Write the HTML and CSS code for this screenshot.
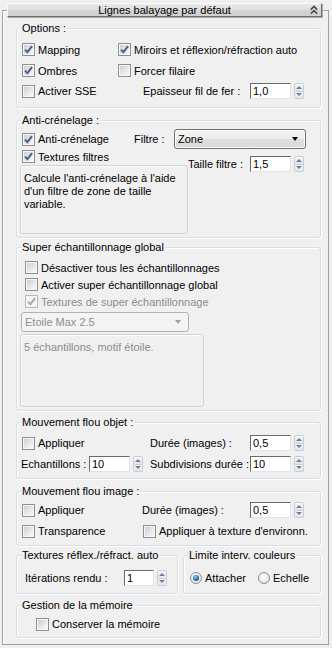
FILE: index.html
```html
<!DOCTYPE html>
<html lang="fr">
<head>
<meta charset="utf-8">
<title>Lignes balayage par défaut</title>
<link rel="stylesheet" href="styles.css">
</head>
<body>
<div class="frame">
  <div class="titlebar">
    <span class="tb-text">Lignes balayage par défaut</span>
    <svg class="chev" width="8" height="10" viewBox="0 0 8 10"><path d="M0.8 4.6L4 1.4L7.2 4.6M0.8 8.8L4 5.6L7.2 8.8" fill="none" stroke="#4a4a4a" stroke-width="1.6"/></svg>
  </div>

  <div class="group g-opt">
    <div class="gtitle">Options :</div>
    <div class="body pl5">
      <div class="row h21 mt4">
        <span class="cb w96"><span class="box"><svg width="9" height="9" viewBox="0 0 9 9"><path d="M1 4.6L3.4 7.2L8 1.2" fill="none" stroke="#4b5f90" stroke-width="2"/></svg></span>Mapping</span>
        <span class="cb"><span class="box"><svg width="9" height="9" viewBox="0 0 9 9"><path d="M1 4.6L3.4 7.2L8 1.2" fill="none" stroke="#4b5f90" stroke-width="2"/></svg></span>Miroirs et réflexion/réfraction auto</span>
      </div>
      <div class="row h21">
        <span class="cb w96"><span class="box"><svg width="9" height="9" viewBox="0 0 9 9"><path d="M1 4.6L3.4 7.2L8 1.2" fill="none" stroke="#4b5f90" stroke-width="2"/></svg></span>Ombres</span>
        <span class="cb"><span class="box"></span>Forcer filaire</span>
      </div>
      <div class="row h20">
        <span class="cb w96"><span class="box"></span>Activer SSE</span>
        <span class="lbl ml25 w107">Epaisseur fil de fer :</span>
        <span class="field">1,0</span>
        <span class="spin"><i></i><i></i></span>
      </div>
    </div>
  </div>

  <div class="group g-anti">
    <div class="gtitle">Anti-crénelage :</div>
    <div class="body pl5">
      <div class="row h20 mt2">
        <span class="cb w112"><span class="box"><svg width="9" height="9" viewBox="0 0 9 9"><path d="M1 4.6L3.4 7.2L8 1.2" fill="none" stroke="#4b5f90" stroke-width="2"/></svg></span>Anti-crénelage</span>
        <span class="lbl w40">Filtre :</span>
        <span class="dd w132"><span>Zone</span></span>
      </div>
      <div class="split">
        <div class="col-left">
          <div class="row h15">
            <span class="cb ml2"><span class="box"><svg width="9" height="9" viewBox="0 0 9 9"><path d="M1 4.6L3.4 7.2L8 1.2" fill="none" stroke="#4b5f90" stroke-width="2"/></svg></span>Textures filtres</span>
          </div>
          <div class="desc desc-anti">Calcule l'anti-crénelage à l'aide<br>d'un filtre de zone de taille<br>variable.</div>
        </div>
        <div class="col-right">
          <div class="row h16 mt7">
            <span class="lbl w62">Taille filtre :</span>
            <span class="field">1,5</span>
            <span class="spin"><i></i><i></i></span>
          </div>
        </div>
      </div>
    </div>
  </div>

  <div class="group g-super">
    <div class="gtitle">Super échantillonnage global</div>
    <div class="body pl8">
      <div class="row h17 mt5">
        <span class="cb"><span class="box"></span>Désactiver tous les échantillonnages</span>
      </div>
      <div class="row h17">
        <span class="cb"><span class="box"></span>Activer super échantillonnage global</span>
      </div>
      <div class="row h17 dis">
        <span class="cb"><span class="box box-dis"><svg width="9" height="9" viewBox="0 0 9 9"><path d="M1 4.6L3.4 7.2L8 1.2" fill="none" stroke="#a9a9a9" stroke-width="2"/></svg></span>Textures de super échantillonnage</span>
      </div>
      <div class="dd dd-dis dd-super"><span>Etoile Max 2.5</span></div>
      <div class="desc desc-super dis">5 échantillons, motif étoile.</div>
    </div>
  </div>

  <div class="group g-mfo">
    <div class="gtitle">Mouvement flou objet :</div>
    <div class="body pl5">
      <div class="row h16 mt6">
        <span class="cb w128"><span class="box"></span>Appliquer</span>
        <span class="lbl w100">Durée (images) :</span>
        <span class="field">0,5</span>
        <span class="spin"><i></i><i></i></span>
      </div>
      <div class="row h16 mt5">
        <span class="lbl mln1 w68">Echantillons :</span>
        <span class="field">10</span>
        <span class="spin"><i></i><i></i></span>
        <span class="lbl ml7 w100">Subdivisions durée :</span>
        <span class="field">10</span>
        <span class="spin"><i></i><i></i></span>
      </div>
    </div>
  </div>

  <div class="group g-mfi">
    <div class="gtitle">Mouvement flou image :</div>
    <div class="body pl5">
      <div class="row h16 mt4">
        <span class="cb w120"><span class="box"></span>Appliquer</span>
        <span class="lbl w108">Durée (images) :</span>
        <span class="field">0,5</span>
        <span class="spin"><i></i><i></i></span>
      </div>
      <div class="row h16 mt5">
        <span class="cb w121"><span class="box"></span>Transparence</span>
        <span class="cb"><span class="box"></span>Appliquer à texture d'environn.</span>
      </div>
    </div>
  </div>

  <div class="pair">
    <div class="group g-tex">
      <div class="gtitle">Textures réflex./réfract. auto</div>
      <div class="body pl8">
        <div class="row h16 mt8">
          <span class="lbl w99">Itérations rendu :</span>
          <span class="field w30">1</span>
          <span class="spin"><i></i><i></i></span>
        </div>
      </div>
    </div>
    <div class="group g-lim">
      <div class="gtitle">Limite interv. couleurs</div>
      <div class="body pl6">
        <div class="row h16 mt8">
          <span class="rb w68"><span class="radio on"></span>Attacher</span>
          <span class="rb"><span class="radio"></span>Echelle</span>
        </div>
      </div>
    </div>
  </div>

  <div class="group g-mem">
    <div class="gtitle">Gestion de la mémoire</div>
    <div class="body pl19">
      <div class="row h16 mt4">
        <span class="cb"><span class="box"></span>Conserver la mémoire</span>
      </div>
    </div>
  </div>
</div>
</body>
</html>
```

FILE: styles.css
```css
* { box-sizing: border-box; }
html, body { margin: 0; padding: 0; }
body {
  background: #f0f0f0;
  font-family: "Liberation Sans", Arial, sans-serif;
  font-size: 11px;
  color: #000;
  width: 332px;
  height: 648px;
  overflow: hidden;
}

.frame {
  margin: 10px 0 0 2px;
  width: 327px;
  height: 635px;
  border: 1px solid #a0a0a0;
  box-shadow: inset 1px 1px 0 #fff;
  display: flow-root;
}

.titlebar {
  height: 14px;
  margin: -8px 6px 0 4px;
  display: grid;
  grid-template-columns: 1fr auto 1fr;
  align-items: center;
  border: 1px solid;
  border-color: #fafafa #6e6e6e #6e6e6e #fafafa;
  background: linear-gradient(#e8e8e8, #dedede 50%, #d4d4d4 51%, #d0d0d0);
  box-shadow: 1px 1px 0 #ababab;
  line-height: 12px;
}
.tb-text { grid-column: 2; white-space: nowrap; }
.chev { grid-column: 3; justify-self: end; margin-right: 3px; }

.group {
  border: 1px solid #d5dfe5;
  border-radius: 3px;
  box-shadow: inset 1px 1px 0 #fff, 1px 1px 0 #fff;
  margin-left: 13px;
  width: 305px;
}
.gtitle {
  width: max-content;
  height: 14px;
  line-height: 14px;
  margin: -8px 0 0 4px;
  padding: 0 1px;
  background: #f0f0f0;
  white-space: nowrap;
}

.g-opt { margin-top: 11px; height: 80px; }
.g-anti { margin-top: 12px; height: 118px; }
.g-super { margin-top: 9px; height: 164px; }
.g-mfo { margin-top: 11px; height: 57px; }
.g-mfi { margin-top: 12px; height: 55px; }
.pair { margin: 9px 0 0 13px; width: 305px; height: 39px; display: flex; gap: 5px; }
.pair .group { margin-left: 0; height: 39px; }
.g-tex { width: 162px; }
.g-lim { width: 138px; }
.g-mem { margin-top: 11px; height: 33px; }

.pl5 { padding-left: 5px; }
.pl6 { padding-left: 6px; }
.pl8 { padding-left: 8px; }
.pl19 { padding-left: 19px; }

.row { display: flex; align-items: center; white-space: nowrap; }
.h15 { height: 15px; }
.h16 { height: 16px; }
.h17 { height: 17px; }
.h20 { height: 20px; }
.h21 { height: 21px; }
.mt2 { margin-top: 2px; }
.mt4 { margin-top: 4px; }
.mt5 { margin-top: 5px; }
.mt6 { margin-top: 6px; }
.mt7 { margin-top: 7px; }
.mt8 { margin-top: 8px; }
.ml2 { margin-left: 2px; }
.ml7 { margin-left: 7px; }
.ml25 { margin-left: 25px; }
.mln1 { margin-left: -1px; }

.w30 { width: 30px; }
.w40 { width: 40px; }
.w62 { width: 62px; }
.w68 { width: 68px; }
.w96 { width: 96px; }
.w99 { width: 99px; }
.w100 { width: 100px; }
.w107 { width: 107px; }
.w108 { width: 108px; }
.w112 { width: 112px; }
.w120 { width: 120px; }
.w121 { width: 121px; }
.w128 { width: 128px; }
.w132 { width: 132px; }

.lbl { flex: none; }
.dis { color: #8d8d8d; }

.cb, .rb { display: flex; align-items: center; gap: 3px; flex: none; }

.box {
  width: 13px;
  height: 13px;
  flex: none;
  border: 1px solid #8e8f8f;
  background: linear-gradient(135deg, #c8ccd1 0%, #e6e8ea 55%, #fbfbfb 100%);
  box-shadow: inset 0 0 0 1px #f6f6f6;
  display: flex;
  align-items: center;
  justify-content: center;
}
.box-dis {
  border-color: #b9b9b9;
  background: #f4f4f4;
}

.radio {
  width: 12px;
  height: 12px;
  flex: none;
  border-radius: 50%;
  border: 1px solid #8e8f8f;
  background: radial-gradient(circle at 40% 40%, #ffffff, #d6d9dc);
  display: flex;
  align-items: center;
  justify-content: center;
}
.radio.on::after {
  content: "";
  width: 6px;
  height: 6px;
  border-radius: 50%;
  background: radial-gradient(circle at 40% 35%, #8fd6fa, #1f6cb2 55%, #0e3b72);
}

.field {
  flex: none;
  width: 41px;
  height: 16px;
  background: #fff;
  border: 1px solid;
  border-color: #6a6a6a #e3e3e3 #e3e3e3 #6a6a6a;
  padding-left: 2px;
  line-height: 14px;
}
.field.w30 { width: 30px; }

.spin {
  flex: none;
  margin-left: 3px;
  width: 10px;
  height: 16px;
  display: flex;
  flex-direction: column;
}
.spin i {
  flex: 1;
  display: flex;
  align-items: center;
  justify-content: center;
  border: 1px solid #c9ced4;
  background: linear-gradient(#f8f8f8, #e2e5e9);
}
.spin i:first-child { border-radius: 2px 2px 0 0; }
.spin i:last-child { border-top: none; border-radius: 0 0 2px 2px; }
.spin i:first-child::after {
  content: "";
  border-left: 3px solid transparent;
  border-right: 3px solid transparent;
  border-bottom: 3px solid #6a7ea3;
}
.spin i:last-child::after {
  content: "";
  border-left: 3px solid transparent;
  border-right: 3px solid transparent;
  border-top: 3px solid #6a7ea3;
}

.dd {
  flex: none;
  height: 20px;
  border: 1px solid #707070;
  border-radius: 3px;
  background: linear-gradient(#f4f4f4, #ececec 48%, #e0e0e0 52%, #d8d8d8);
  box-shadow: inset 0 0 0 1px #fbfbfb;
  display: flex;
  align-items: center;
  justify-content: space-between;
  padding: 0 7px 0 3px;
}
.dd::after {
  content: "";
  border-left: 3.5px solid transparent;
  border-right: 3.5px solid transparent;
  border-top: 4px solid #000;
}
.dd-dis {
  border-color: #adb2b5;
  background: #f4f4f4;
  box-shadow: none;
  color: #8d8d8d;
}
.dd-dis::after { border-top-color: #a3a3a3; }
.dd-super { margin: 2px 0 0 -4px; width: 168px; }

.split { display: flex; }
.col-left { margin-left: -2px; width: 168px; flex: none; }
.col-right { flex: none; }

.desc {
  border: 1px solid #cfd3d7;
  border-radius: 3px;
  box-shadow: inset 1px 1px 0 #fff;
  padding: 6px 3px 0 3px;
  line-height: 13px;
}
.desc-anti { margin-top: 1px; width: 168px; height: 69px; }
.desc-super { margin: 2px 0 0 -5px; width: 184px; height: 73px; }
```
